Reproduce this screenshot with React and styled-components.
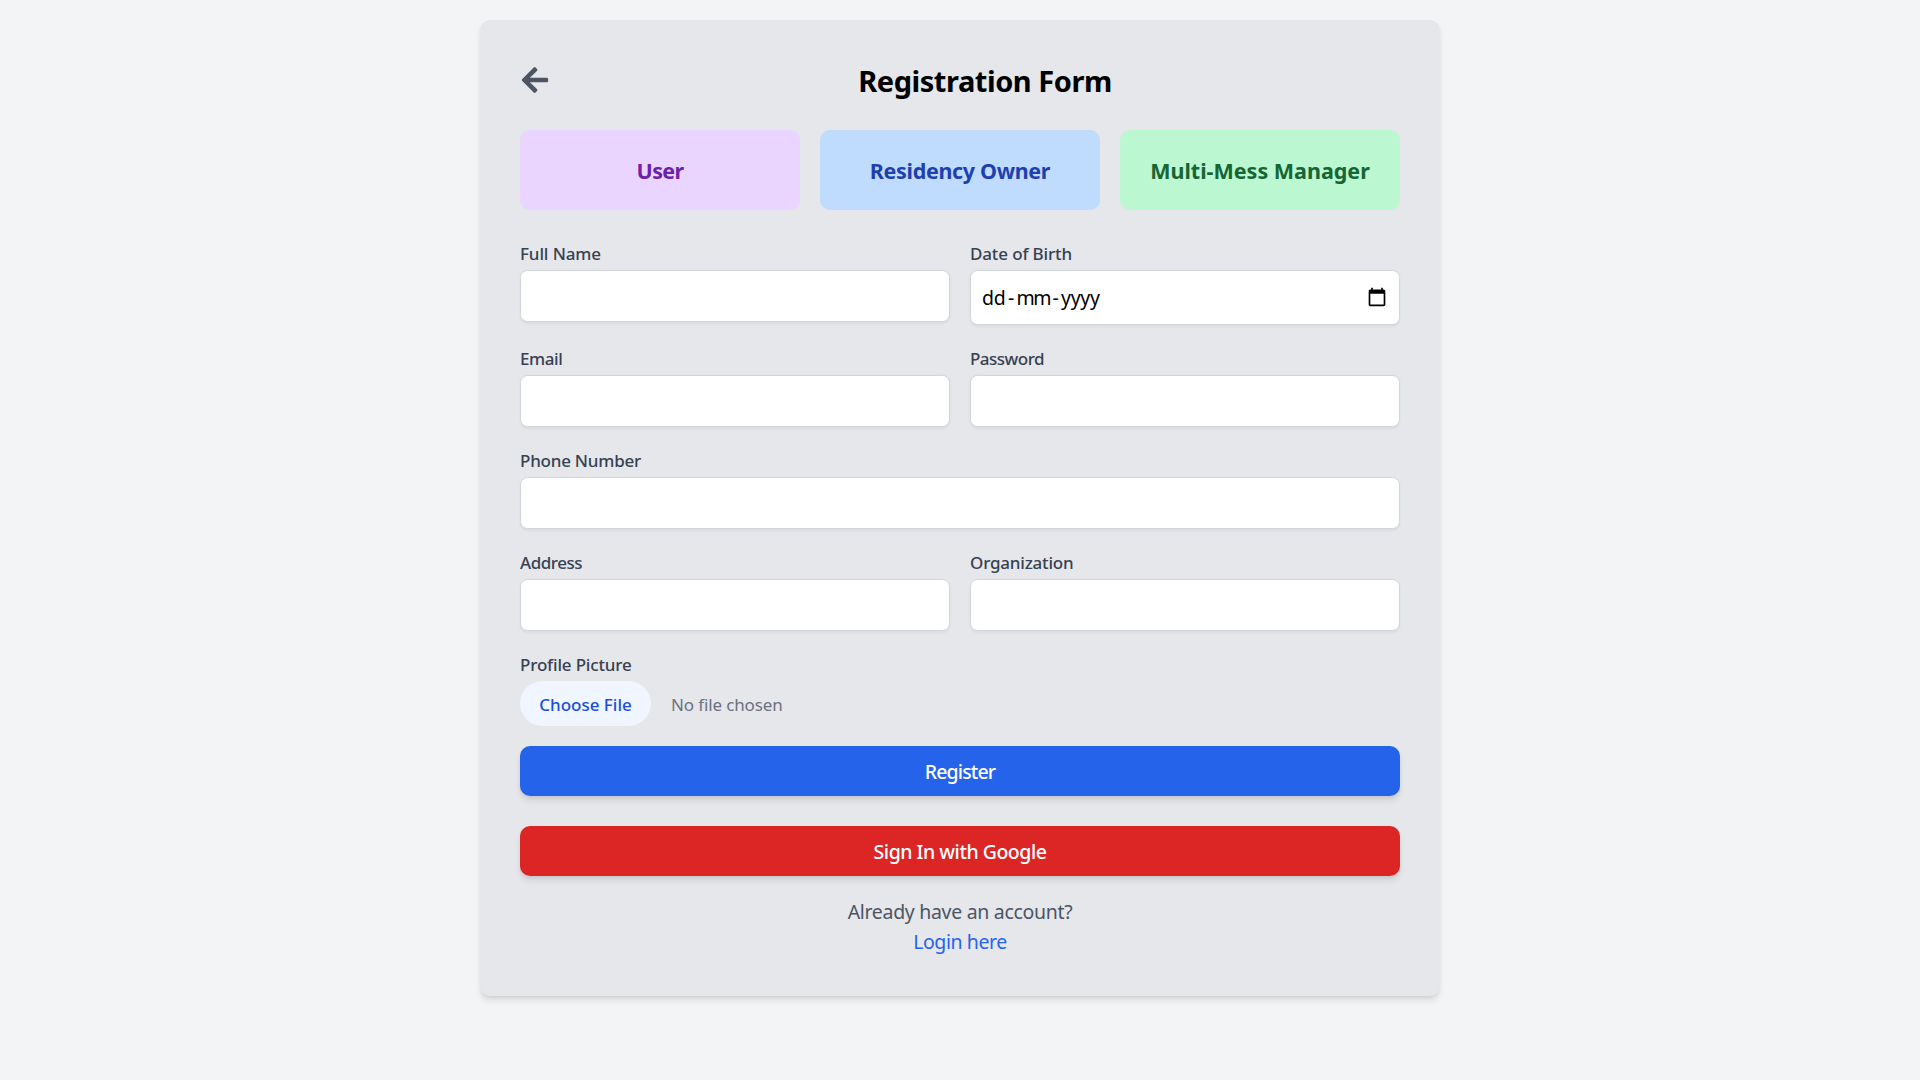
import React from "react";
import styled, { createGlobalStyle, css } from "styled-components";
import { FaArrowLeft } from "react-icons/fa";

const GlobalStyle = createGlobalStyle`
  *, *::before, *::after { box-sizing: border-box; }
  body {
    margin: 0;
    background: #f3f4f6;
    font-family: "Noto Sans", "Open Sans", sans-serif;
    font-size: 19.5px;
    line-height: 30px;
    color: #000;
  }
`;

const tracking = css`
  letter-spacing: ${({ $track = 0 }) => $track}px;
`;

const elevation = "0 5px 7.5px -1.25px rgba(0, 0, 0, 0.1), 0 2.5px 5px -2.5px rgba(0, 0, 0, 0.1)";

const Page = styled.main`
  min-height: 100vh;
  display: flex;
  justify-content: center;
  align-items: flex-start;
  padding: 20px;
`;

const Card = styled.section`
  width: 960px;
  padding: 40px;
  border-radius: 10px;
  background: #e5e7eb;
  box-shadow: ${elevation};
`;

const Header = styled.header`
  display: flex;
  align-items: center;
  gap: 20px;
  height: 40px;
  margin-bottom: 30px;
`;

const BackButton = styled.button`
  display: flex;
  height: 40px;
  padding: 0;
  border: 0;
  background: none;
  align-items: center;
  color: #4b5563;
`;

const Title = styled.h1`
  flex: 1;
  margin: 0;
  padding-top: 1px;
  font-size: 29px;
  line-height: 40px;
  font-weight: 700;
  text-align: center;
  ${tracking}
`;

const RoleGrid = styled.div`
  display: grid;
  grid-template-columns: repeat(3, 1fr);
  gap: 20px;
  margin-bottom: 30px;
`;

const RoleTile = styled.button`
  height: 80px;
  padding: 1px 0 0;
  border: 0;
  border-radius: 10px;
  font: 700 21.5px/30px "Noto Sans", "Open Sans", sans-serif;
  background: ${({ $bg }) => $bg};
  color: ${({ $fg }) => $fg};
  ${tracking}
`;

const Form = styled.form`
  display: grid;
  grid-template-columns: 1fr 1fr;
  gap: 20px;
`;

const Field = styled.div`
  grid-column: ${({ $wide }) => ($wide ? "1 / -1" : "auto")};
`;

const Label = styled.label`
  display: block;
  height: 25px;
  margin-bottom: 5px;
  padding-top: 2px;
  font-size: 17px;
  line-height: 23px;
  font-weight: 500;
  color: #374151;
  ${tracking}
`;

const box = css`
  width: 100%;
  border: 1px solid #d1d5db;
  border-radius: 7.5px;
  background: #fff;
  box-shadow: 0 1.25px 2.5px rgba(0, 0, 0, 0.05);
`;

const Input = styled.input`
  ${box}
  display: block;
  height: 52px;
  padding: 10px;
  font: inherit;
`;

const DateBox = styled.div`
  ${box}
  display: flex;
  align-items: center;
  justify-content: space-between;
  height: 55px;
  padding: 1px 12px 0 11px;
`;

const DateParts = styled.div`
  display: flex;
`;

const DatePart = styled.span`
  width: ${({ $w }) => $w}px;
  ${tracking}
`;

const CalendarIcon = styled.svg`
  width: 20px;
  height: 20px;
  margin-bottom: 2px;
`;

const FileRow = styled.div`
  display: flex;
  align-items: center;
  gap: 20px;
  font-size: 17px;
  line-height: 25px;
  color: #6b7280;
`;

const FileButton = styled.button`
  width: 131px;
  height: 45px;
  padding: 1px 0 0;
  border: 0;
  border-radius: 22.5px;
  font: 500 17px/25px "Noto Sans", "Open Sans", sans-serif;
  background: #eff6ff;
  color: #1d4ed8;
  ${tracking}
`;

const FileStatus = styled.span`
  padding-top: 1px;
  ${tracking}
`;

const Actions = styled.div`
  display: grid;
  gap: 30px;
  margin: 20px 0;
`;

const SubmitButton = styled.button`
  width: 100%;
  height: 50px;
  padding: 2px 0 0;
  border: 0;
  border-radius: 10px;
  font: 500 19.5px/30px "Noto Sans", "Open Sans", sans-serif;
  color: #fff;
  background: ${({ $bg }) => $bg};
  box-shadow: ${elevation};
  ${tracking}
`;

const Footer = styled.footer`
  display: flex;
  flex-direction: column;
  align-items: center;
  height: 60px;
  padding-top: 1px;
  color: #4b5563;
`;

const FooterText = styled.span`
  ${tracking}
`;

const LoginLink = styled.a`
  color: #2563eb;
  ${tracking}
`;

const roles = [
  { name: "User", bg: "#e9d5ff", fg: "#6b21a8", track: -0.67 },
  { name: "Residency Owner", bg: "#bfdbfe", fg: "#1e40af", track: -0.34 },
  { name: "Multi-Mess Manager", bg: "#bbf7d0", fg: "#166534", track: 0 },
];

const fields = [
  { label: "Full Name", type: "text", track: -0.12 },
  { label: "Date of Birth", type: "date", track: -0.14 },
  { label: "Email", type: "email", track: -0.4 },
  { label: "Password", type: "password", track: -0.51 },
  { label: "Phone Number", type: "tel", track: -0.23, wide: true },
  { label: "Address", type: "text", track: -0.46 },
  { label: "Organization", type: "text", track: -0.2 },
];

function DateInput() {
  return (
    <DateBox>
      <DateParts>
        <DatePart $w={26} $track={-0.3}>dd</DatePart>
        <DatePart $w={8.5}>-</DatePart>
        <DatePart $w={36} $track={-1.5}>mm</DatePart>
        <DatePart $w={8.5}>-</DatePart>
        <DatePart $w={40} $track={-0.28}>yyyy</DatePart>
      </DateParts>
      <CalendarIcon viewBox="0 0 24 24">
        <path d="M20 3h-1V1h-2v2H7V1H5v2H4c-1.1 0-2 .9-2 2v16c0 1.1.9 2 2 2h16c1.1 0 2-.9 2-2V5c0-1.1-.9-2-2-2zm0 18H4V8h16v13z" />
      </CalendarIcon>
    </DateBox>
  );
}

export default function App() {
  return (
    <>
      <GlobalStyle />
      <Page>
        <Card>
          <Header>
            <BackButton type="button" aria-label="Back">
              <FaArrowLeft size={30} />
            </BackButton>
            <Title $track={-0.46}>Registration Form</Title>
          </Header>
          <RoleGrid>
            {roles.map((r) => (
              <RoleTile key={r.name} $bg={r.bg} $fg={r.fg} $track={r.track}>{r.name}</RoleTile>
            ))}
          </RoleGrid>
          <Form>
            {fields.map((f) => (
              <Field key={f.label} $wide={f.wide}>
                <Label $track={f.track}>{f.label}</Label>
                {f.type === "date" ? <DateInput /> : <Input type={f.type} />}
              </Field>
            ))}
            <Field $wide>
              <Label $track={-0.17}>Profile Picture</Label>
              <FileRow>
                <FileButton type="button">Choose File</FileButton>
                <FileStatus $track={-0.13}>No file chosen</FileStatus>
              </FileRow>
            </Field>
          </Form>
          <Actions>
            <SubmitButton $bg="#2563eb" $track={-0.86}>Register</SubmitButton>
            <SubmitButton $bg="#dc2626" $track={-0.48}>Sign In with Google</SubmitButton>
          </Actions>
          <Footer>
            <FooterText $track={-0.31}>Already have an account?</FooterText>
            <LoginLink $track={-0.43}>Login here</LoginLink>
          </Footer>
        </Card>
      </Page>
    </>
  );
}
